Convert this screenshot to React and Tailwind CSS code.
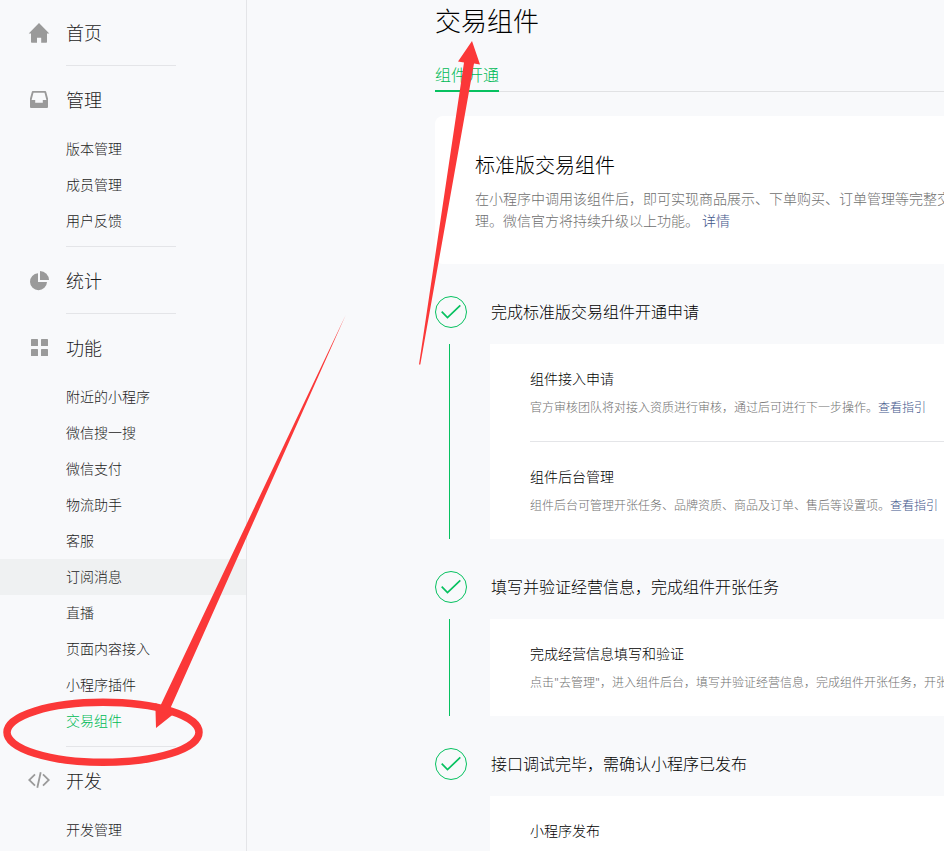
import React from 'react';

const HomeIcon = () => (
  <svg viewBox="0 0 22 22" className="w-[22px] h-[22px]" fill="currentColor" aria-hidden="true">
    <path d="M11 1 L21.3 11.6 H19 V20 a.8 .8 0 0 1 -.8 .8 H13.2 V15.8 H9 V20.8 H3.8 A.8 .8 0 0 1 3 20 V11.6 H.7 Z" />
  </svg>
);

const InboxIcon = () => (
  <svg viewBox="0 0 22 22" className="w-[22px] h-[22px]" fill="currentColor" aria-hidden="true">
    <path
      fillRule="evenodd"
      d="M4.8 2 H17.2 a1 1 0 0 1 .95 .7 L20 9.6 V18 a1 1 0 0 1 -1 1 H3 a1 1 0 0 1 -1 -1 V9.6 L3.85 2.7 A1 1 0 0 1 4.8 2 Z M5.5 3.7 L3.6 11 H7.2 V13.8 H14.8 V11 H18.4 L16.5 3.7 Z"
    />
  </svg>
);

const PieIcon = () => (
  <svg viewBox="0 0 22 22" className="w-[22px] h-[22px]" fill="currentColor" aria-hidden="true">
    <path d="M10 3.2 V12 H19 A8.5 8.5 0 1 1 10 3.2 Z" />
    <path d="M12 1 A9 9 0 0 1 21 10 H12 Z" />
  </svg>
);

const GridIcon = () => (
  <svg viewBox="0 0 22 22" className="w-[22px] h-[22px]" fill="currentColor" aria-hidden="true">
    <rect x="3" y="2" width="7" height="7" rx="0.6" />
    <rect x="13" y="2" width="7" height="7" rx="0.6" />
    <rect x="3" y="12" width="7" height="7" rx="0.6" />
    <rect x="13" y="12" width="7" height="7" rx="0.6" />
  </svg>
);

const CodeIcon = () => (
  <svg viewBox="0 0 22 22" className="w-[22px] h-[22px]" fill="none" stroke="currentColor" strokeWidth="1.8" aria-hidden="true">
    <path d="M7 4.4 L1.2 10 L7 15.6 M15 4.4 L20.8 10 L15 15.6 M12.7 2.2 L9.3 17.8" />
  </svg>
);

const menu = [
  { title: '首页', icon: HomeIcon, items: [] },
  { title: '管理', icon: InboxIcon, items: ['版本管理', '成员管理', '用户反馈'] },
  { title: '统计', icon: PieIcon, items: [] },
  {
    title: '功能',
    icon: GridIcon,
    items: [
      '附近的小程序',
      '微信搜一搜',
      '微信支付',
      '物流助手',
      '客服',
      '订阅消息',
      '直播',
      '页面内容接入',
      '小程序插件',
      '交易组件',
    ],
  },
  { title: '开发', icon: CodeIcon, items: ['开发管理'] },
];

const steps = [
  {
    title: '完成标准版交易组件开通申请',
    items: [
      {
        name: '组件接入申请',
        desc: '官方审核团队将对接入资质进行审核，通过后可进行下一步操作。',
        link: '查看指引',
      },
      {
        name: '组件后台管理',
        desc: '组件后台可管理开张任务、品牌资质、商品及订单、售后等设置项。',
        link: '查看指引',
      },
    ],
  },
  {
    title: '填写并验证经营信息，完成组件开张任务',
    items: [
      {
        name: '完成经营信息填写和验证',
        desc: '点击"去管理"，进入组件后台，填写并验证经营信息，完成组件开张任务，开张',
      },
    ],
  },
  {
    title: '接口调试完毕，需确认小程序已发布',
    items: [{ name: '小程序发布' }],
  },
];

function Sidebar({ active, hovered }) {
  const getItemStyle = (item) => {
    if (item === active) return 'text-[#00b956]';
    if (item === hovered) return 'bg-[#eff1f2] text-[#1c1c1c]';
    return 'text-[#1c1c1c]';
  };

  return (
    <nav className="w-[247px] shrink-0 border-r border-[#e4e5e8] -mt-px">
      {menu.map(({ title, icon: Icon, items }, i) => (
        <section key={title}>
          <h2 className="flex items-center h-[65px] pl-7 text-lg font-light text-[#1c1c1c]">
            <span className="w-[38px] pt-0.5 text-[#9a9a9a]">
              <Icon />
            </span>
            {title}
          </h2>
          <ul className={items.length ? 'pb-[7px]' : 'pb-px'}>
            {items.map((item) => (
              <li key={item}>
                <a href="#" className={`block h-9 pl-[66px] text-sm leading-[34px] ${getItemStyle(item)}`}>
                  {item}
                </a>
              </li>
            ))}
          </ul>
          {i < menu.length - 1 && <hr className="ml-[66px] w-[110px] border-[#e4e5e8]" />}
        </section>
      ))}
    </nav>
  );
}

function Step({ step, last }) {
  return (
    <li className="mb-8">
      <div className="flex items-center gap-6">
        <svg viewBox="0 0 32 32" className="w-8 h-8 shrink-0" fill="none" stroke="#07c160" aria-hidden="true">
          <circle cx="16" cy="16" r="15.5" />
          <path d="M6.7 15.7 L12.5 21.6 L25.3 9.4" strokeWidth="1.7" />
        </svg>
        <h3 className="pb-0.5 text-base text-black">{step.title}</h3>
      </div>
      <div className="flex mt-4">
        <div className={`ml-[14px] mr-10 w-px shrink-0 ${last ? '' : 'bg-[#07c160]'}`} />
        <div className="grow bg-white pl-10">
          {step.items.map((item, i) => (
            <div key={item.name} className={`pt-[23px] pb-6 ${i > 0 ? 'border-t border-[#e4e5e8]' : ''}`}>
              <h4 className="text-sm leading-[22px] text-black">{item.name}</h4>
              <p className="mt-2 min-h-5 text-xs leading-5 text-[#707070]">
                {item.desc}
                {item.link && (
                  <a href="#" className="text-[#3f568a]">
                    {item.link}
                  </a>
                )}
              </p>
            </div>
          ))}
        </div>
      </div>
    </li>
  );
}

// Hand-drawn marks pointing at the menu entry and the page title
function Marks() {
  return (
    <svg
      width="944"
      height="851"
      viewBox="0 0 944 851"
      className="absolute top-0 left-0 max-w-none pointer-events-none"
      fill="#fb3838"
      aria-hidden="true"
    >
      <path d="M472 41 L480 64.5 L474 63.5 L420.3 364.5 L419 364.5 L464 62.5 L458 61.5 Z" />
      <path d="M156 728 L155.3 703 L160.5 705.5 L345.7 315 L170.7 707.5 L175.5 712.5 Z" />
      <ellipse cx="103" cy="732.3" rx="96" ry="30" fill="none" stroke="#fb3838" strokeWidth="7.5" />
    </svg>
  );
}

export default function App() {
  return (
    <div className="relative flex h-screen overflow-hidden bg-[#f8f9fb] font-['Noto_Sans_CJK_SC',sans-serif] font-light">
      <Sidebar active="交易组件" hovered="订阅消息" />

      <main className="grow min-w-0 pl-[188px] whitespace-nowrap">
        <h1 className="pt-0.5 text-[26px] leading-9 text-black">交易组件</h1>
        <div className="flex mt-[22px] border-b border-[#e1e2e4]">
          <a href="#" className="-mb-px h-8 border-b-2 border-[#07c160] text-base leading-7 text-[#00b956]">
            组件开通
          </a>
        </div>

        <section className="mt-6 rounded-l-lg bg-white pt-[33px] pb-[33px] pl-10">
          <h2 className="text-xl leading-8 text-black">标准版交易组件</h2>
          <p className="mt-[6px] text-sm leading-[22px] text-[#707070]">
            在小程序中调用该组件后，即可实现商品展示、下单购买、订单管理等完整交
            <br />
            理。微信官方将持续升级以上功能。{' '}
            <a href="#" className="text-[#3f568a]">
              详情
            </a>
          </p>
        </section>

        <ol className="mt-8">
          {steps.map((step, i) => (
            <Step key={step.title} step={step} last={i === steps.length - 1} />
          ))}
        </ol>
      </main>

      <Marks />
    </div>
  );
}
